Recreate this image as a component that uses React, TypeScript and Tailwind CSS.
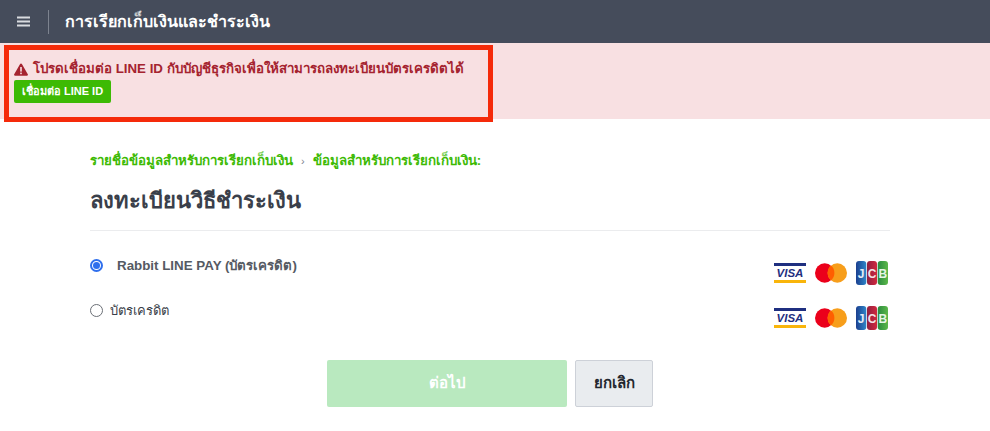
const font = '"Liberation Sans","Noto Sans",sans-serif';

function CardIcons({ id }: { id: string }) {
  return (
    <div className="mr-[2px] mt-[8px] flex items-center gap-[9px]">
      <svg width="32" height="20" viewBox="0 0 32 20" aria-hidden="true">
        <rect x="0" y="0" width="32" height="3" fill="#1f2f80" />
        <rect x="0" y="17" width="32" height="3" fill="#f9b50b" />
        <text x="16" y="14.2" textAnchor="middle" fontSize="11.5" fontWeight="700" fontStyle="italic" fill="#1f2f80" fontFamily="Liberation Sans">VISA</text>
      </svg>
      <svg width="32" height="20" viewBox="0 0 32 20" aria-hidden="true">
        <circle cx="9.7" cy="10" r="9.7" fill="#eb001b" />
        <circle cx="22.3" cy="10" r="9.7" fill="#f79e1b" />
        <path d="M16 2.62A9.7 9.7 0 0 1 16 17.38A9.7 9.7 0 0 1 16 2.62z" fill="#ff5f00" />
      </svg>
      <svg width="32" height="24" viewBox="0 0 32 24" aria-hidden="true">
        <defs>
          <linearGradient id={`${id}b`} x1="0" y1="0" x2="1" y2="0">
            <stop offset="0" stopColor="#1b3f8f" />
            <stop offset="1" stopColor="#2f86c8" />
          </linearGradient>
          <linearGradient id={`${id}r`} x1="0" y1="0" x2="1" y2="0">
            <stop offset="0" stopColor="#8f1f3f" />
            <stop offset="1" stopColor="#d1293f" />
          </linearGradient>
          <linearGradient id={`${id}g`} x1="0" y1="0" x2="1" y2="0">
            <stop offset="0" stopColor="#2a8a3f" />
            <stop offset="1" stopColor="#5cb84a" />
          </linearGradient>
        </defs>
        <rect x="0" y="0" width="10.3" height="24" rx="3" fill={`url(#${id}b)`} />
        <rect x="11" y="0" width="10" height="24" rx="3" fill={`url(#${id}r)`} />
        <rect x="21.7" y="0" width="10.3" height="24" rx="3" fill={`url(#${id}g)`} />
        <text x="5.2" y="16.5" textAnchor="middle" fontSize="12" fontWeight="700" fill="#e4edf7" fontFamily="Liberation Sans">J</text>
        <text x="16" y="16.5" textAnchor="middle" fontSize="12" fontWeight="700" fill="#f5e2e6" fontFamily="Liberation Sans">C</text>
        <text x="26.8" y="16.5" textAnchor="middle" fontSize="12" fontWeight="700" fill="#e6f5e8" fontFamily="Liberation Sans">B</text>
      </svg>
    </div>
  );
}

export default function App() {
  return (
    <div className="relative h-[431px] w-[990px] overflow-hidden bg-white" style={{ fontFamily: font }}>
      <header className="flex h-[43px] items-center bg-[#454c5b] pl-[17px]">
        <svg width="13" height="11" viewBox="0 0 13 11" aria-hidden="true" className="mb-[1px]">
          <rect y="0.5" width="13" height="2" fill="#d9dbe0" />
          <rect y="4.5" width="13" height="2" fill="#d9dbe0" />
          <rect y="8.5" width="13" height="2" fill="#d9dbe0" />
        </svg>
        <div className="ml-[18px] h-[24px] w-px bg-[#7d838f]" />
        <h1 className="ml-[16px] text-[16.1px] font-bold text-white">การเรียกเก็บเงินและชำระเงิน</h1>
      </header>

      <div className="h-[76px] bg-[#f8e0e2] pl-[14px] pt-[16px]">
        <div className="flex items-center gap-[5px] text-[13.3px] font-bold leading-[20px] text-[#a5232f]">
          <svg width="14" height="13" viewBox="0 0 14 13" aria-hidden="true">
            <path d="M7 0.5a1 1 0 0 1 .9.5l5.9 10.3a1 1 0 0 1-.9 1.5H1.1a1 1 0 0 1-.9-1.5L6.1 1a1 1 0 0 1 .9-.5z" fill="#a5232f" />
            <rect x="6.2" y="4" width="1.6" height="4.6" fill="#f8e0e2" />
            <rect x="6.2" y="9.6" width="1.6" height="1.6" fill="#f8e0e2" />
          </svg>
          <span>โปรดเชื่อมต่อ LINE ID กับบัญชีธุรกิจเพื่อให้สามารถลงทะเบียนบัตรเครดิตได้</span>
        </div>
        <button className="mt-px flex h-[23px] w-[97px] items-center justify-center rounded-[2px] bg-[#3dba04] text-[11px] font-bold text-white">
          เชื่อมต่อ LINE ID
        </button>
      </div>

      <div className="pointer-events-none absolute left-[4px] top-[45px] h-[77px] w-[489px] border-[5px] border-[#f52a0a]" />

      <main className="ml-[90px] w-[800px] pt-[32px]">
        <nav className="flex items-center text-[13.3px] font-bold leading-[20px] text-[#3dba04]">
          <span>รายชื่อข้อมูลสำหรับการเรียกเก็บเงิน</span>
          <span className="mx-[8px] text-[11px] font-normal text-[#7d838f]">›</span>
          <span>ข้อมูลสำหรับการเรียกเก็บเงิน:</span>
        </nav>
        <h2 className="mt-[15px] border-b border-[#ebecee] pb-[14px] text-[22px] font-bold leading-[30px] text-[#3a3f4a]">ลงทะเบียนวิธีชำระเงิน</h2>

        <div className="mt-[22px] flex items-start justify-between">
          <label className="flex h-[24px] items-center">
            <span className="flex h-[13px] w-[13px] items-center justify-center rounded-full border-2 border-[#2f6fed] bg-white">
              <span className="h-[7px] w-[7px] rounded-full bg-[#2f6fed]" />
            </span>
            <span className="ml-[14px] pt-[2px] text-[13.35px] font-bold text-[#555a63]">Rabbit LINE PAY (บัตรเครดิต)</span>
          </label>
          <CardIcons id="a" />
        </div>

        <div className="mt-[13px] flex items-start justify-between">
          <label className="flex h-[24px] items-center">
            <span className="h-[13px] w-[13px] rounded-full border border-[#6b6f76] bg-white" />
            <span className="ml-[7px] pt-[1px] text-[13px] text-[#3a3f4a]">บัตรเครดิต</span>
          </label>
          <CardIcons id="c" />
        </div>

        <div className="mt-[30px] flex justify-center gap-[8px]">
          <button className="h-[47px] w-[240px] rounded-[2px] bg-[#b9e9bf] text-[15px] font-bold text-white">ต่อไป</button>
          <button className="h-[47px] w-[78px] rounded-[2px] border border-[#cdd1d8] bg-[#e9ecef] text-[15px] font-bold text-[#23272e]">ยกเลิก</button>
        </div>
      </main>
    </div>
  );
}
